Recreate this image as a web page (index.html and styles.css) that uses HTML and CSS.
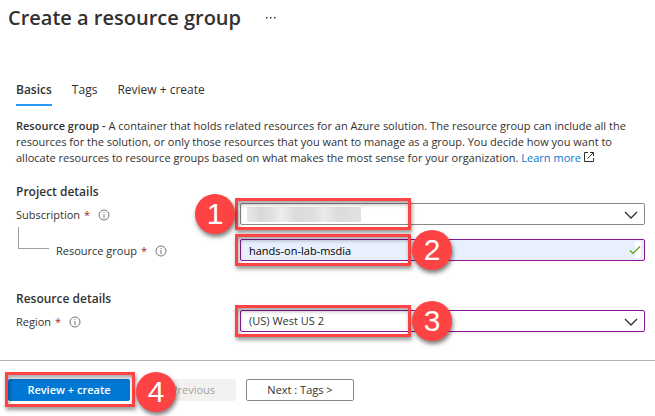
FILE: index.html
```html
<!DOCTYPE html>
<html lang="en">
<head>
<meta charset="utf-8">
<title>Create a resource group</title>
<link rel="stylesheet" href="styles.css">
</head>
<body>
<header class="page-head">
  <h1>Create a resource group</h1>
  <button class="more" type="button" aria-label="More actions"><svg width="12" height="4" viewBox="0 0 12 4"><path d="M1 1h1.500v1.500H1zM5 1h1.500v1.500H5zM9 1h1.500v1.500H9z" fill="#323130"/></svg></button>
</header>
<nav class="tabs">
  <a class="tab active" href="#basics">Basics</a>
  <a class="tab" href="#tags">Tags</a>
  <a class="tab" href="#review">Review + create</a>
</nav>
<main>
  <p class="intro"><b>Resource group -</b> A container that holds related resources for an Azure solution. The resource group can include all the<br>resources for the solution, or only those resources that you want to manage as a group. You decide how you want to<br>allocate resources to resource groups based on what makes the most sense for your organization. <a href="#learn">Learn more <svg width="10" height="10" viewBox="0 0 10 10" fill="none" stroke="#323130"><path d="M4 .5H.5v9h9V6M6 .5h3.5V4M9.5.5l-6 6"/></svg></a></p>

  <section class="group">
    <h2>Project details</h2>
    <div class="row">
      <label for="subscription">Subscription <span class="req">*</span><svg class="info" width="12" height="12" viewBox="0 0 12 12"><circle cx="6" cy="6" r="5" fill="none" stroke="#797775"/><path d="M6 5v4M6 3v1" stroke="#797775"/></svg></label>
      <div class="field">
        <select id="subscription" class="control"><option></option></select>
        <span class="redacted"></span>
        <svg class="chevron" width="14" height="8" viewBox="0 0 14 8"><path d="M1 1l6 6 6-6" fill="none" stroke="#323130" stroke-width="1.3"/></svg>
        <span class="frame"></span><span class="badge before">1</span>
      </div>
    </div>
    <div class="row child">
      <label for="group-name">Resource group <span class="req">*</span><svg class="info" width="12" height="12" viewBox="0 0 12 12"><circle cx="6" cy="6" r="5" fill="none" stroke="#797775"/><path d="M6 5v4M6 3v1" stroke="#797775"/></svg></label>
      <div class="field">
        <input id="group-name" class="control filled" type="text" value="hands-on-lab-msdia">
        <span class="valid"><svg width="12" height="16" viewBox="0 0 12 16"><path d="M1 8.500l3 3 7-7" fill="none" stroke="#57a300" stroke-width="1.200"/></svg></span>
        <span class="frame"></span><span class="badge after">2</span>
      </div>
    </div>
  </section>

  <section class="group">
    <h2>Resource details</h2>
    <div class="row">
      <label for="region">Region <span class="req">*</span><svg class="info" width="12" height="12" viewBox="0 0 12 12"><circle cx="6" cy="6" r="5" fill="none" stroke="#797775"/><path d="M6 5v4M6 3v1" stroke="#797775"/></svg></label>
      <div class="field">
        <select id="region" class="control changed"><option>(US) West US 2</option></select>
        <svg class="chevron" width="14" height="8" viewBox="0 0 14 8"><path d="M1 1l6 6 6-6" fill="none" stroke="#323130" stroke-width="1.3"/></svg>
        <span class="frame"></span><span class="badge after">3</span>
      </div>
    </div>
  </section>
</main>
<footer class="actions">
  <div class="primary-wrap">
    <button class="btn primary" type="button">Review + create</button>
    <span class="frame"></span><span class="badge after">4</span>
  </div>
  <button class="btn previous" type="button" disabled>Previous</button>
  <button class="btn next" type="button">Next : Tags &gt;</button>
</footer>
</body>
</html>
```
FILE: styles.css
```css
* { box-sizing: border-box; }

body {
  margin: 0;
  background: #fff;
  color: #323130;
  font: 11px/16px "Open Sans", "Noto Sans", sans-serif;
}

button, input, select { font: inherit; color: inherit; }

.page-head {
  display: flex;
  align-items: center;
  gap: 24px;
  height: 36px;
  padding-left: 8px;
}

h1 { margin: 0; font-size: 20px; line-height: 28px; font-weight: 600; }

.more { display: flex; padding: 0; border: 0; background: none; }

.tabs { display: flex; gap: 20px; padding: 45px 16px 0; }

.tab {
  padding-bottom: 5px;
  border-bottom: 2px solid transparent;
  color: inherit;
  font-size: 12px;
  line-height: 18px;
  text-decoration: none;
}

.tab.active { border-color: #2899f5; font-weight: 600; }

main { padding: 12px 10px 0 16px; }

.intro { margin: 0; }
.intro b { font-weight: 600; }
.intro a { color: #0078d4; text-decoration: none; }

.group { padding-top: 17px; }
.group + .group { padding-top: 29px; }

h2 { margin: 0 0 3px; font-size: 12px; line-height: 17px; font-weight: 600; }

.row { display: grid; grid-template-columns: 224px 1fr; align-items: center; }

.row label { display: flex; align-items: center; padding-top: 2px; }

.req { margin-left: 4px; color: #a4262c; }

.info { margin-left: 8px; }

.child { margin-top: 14px; }

.child label { position: relative; padding-left: 40px; }

.child label::before {
  content: "";
  position: absolute;
  left: 2px;
  bottom: 10px;
  width: 30px;
  height: 21px;
  border: solid #a19f9d;
  border-width: 0 0 1px 1px;
}

.field { position: relative; }

.control {
  display: block;
  width: 100%;
  height: 22px;
  padding: 0 8px;
  border: 1px solid #8a8886;
  border-radius: 2px;
  background: #fff;
  appearance: none;
}

.changed, .filled { border-color: #881798; }
.filled { background: #e8f0fe; color: #000; }

.chevron { position: absolute; right: 7px; top: 8px; }

.valid {
  position: absolute;
  right: 4px;
  top: 3px;
  display: flex;
  background: linear-gradient(90deg, transparent 50%, #fff 50%);
}

.redacted {
  position: absolute;
  left: 7px;
  top: 4px;
  width: 114px;
  height: 15px;
  background: linear-gradient(90deg, #e8e7e7, #dad9d9 12%, #e5e4e4 25%, #efeeee 30%, #dcdbdb 42%, #e1e0e0 60%, #eceaea 67%, #dddcdc 80%, #e2e2e5);
}

.frame {
  position: absolute;
  left: -5px;
  top: -5px;
  width: 176px;
  height: 32px;
  border: 3px solid #fd4343;
  box-shadow: 1px 3px 4px rgba(0, 0, 0, .4), inset 1px 3px 4px rgba(0, 0, 0, .35);
  pointer-events: none;
}

.badge {
  position: absolute;
  z-index: 1;
  top: -9px;
  width: 40px;
  height: 40px;
  border-radius: 50%;
  background: #fd4343;
  box-shadow: 1px 3px 4px rgba(0, 0, 0, .5);
  color: #fff;
  font: 30px/40px "Liberation Sans", Arial, sans-serif;
  text-align: center;
  pointer-events: none;
}

.before { left: -45px; }
.field .after { left: 172px; }

.actions {
  display: flex;
  gap: 10px;
  margin-top: 28px;
  padding: 18px 8px 15px;
  border-top: 1px solid #b3b0ad;
}

.primary-wrap { position: relative; }
.primary-wrap .frame { left: -3px; top: -7px; width: 130px; height: 35px; }
.primary-wrap .after { left: 128px; top: -7px; }

.btn {
  height: 22px;
  padding: 0;
  border: 1px solid #8a8886;
  border-radius: 2px;
  background: #fff;
  line-height: 20px;
}

.primary { width: 122px; border-color: #0078d4; background: #0078d4; color: #fff; font-weight: 600; }
.previous { width: 86px; margin-left: 10px; border-color: #f3f2f1; background: #f3f2f1; color: #a19f9d; }
.next { width: 108px; }
```
